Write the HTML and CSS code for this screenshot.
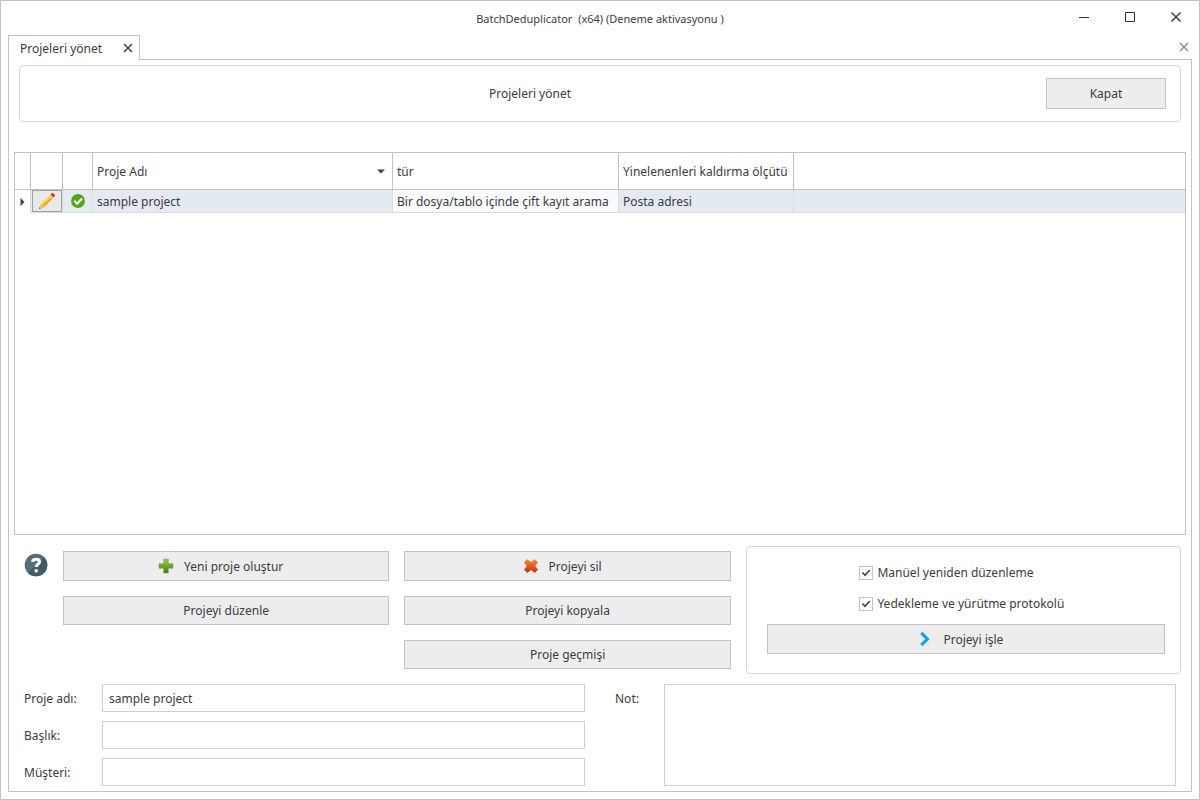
FILE: index.html
```html
<!DOCTYPE html>
<html lang="tr">
<head>
<meta charset="utf-8">
<meta name="viewport" content="width=device-width, initial-scale=1">
<title>BatchDeduplicator</title>
<link rel="stylesheet" href="styles.css">
</head>
<body>
<div class="window">
  <header class="titlebar">
    <h1 class="app-title">BatchDeduplicator&nbsp; (x64) (Deneme aktivasyonu )</h1>
    <div class="window-controls">
      <button type="button" class="icon-button" aria-label="Simge durumuna küçült">
        <svg width="12" height="12" viewBox="0 0 12 12"><path d="M1 6.500h10" stroke="#333" fill="none"/></svg>
      </button>
      <button type="button" class="icon-button" aria-label="Ekranı kapla">
        <svg width="12" height="12" viewBox="0 0 12 12"><path d="M1.500 1.500h9v9h-9z" stroke="#333" fill="none"/></svg>
      </button>
      <button type="button" class="icon-button" aria-label="Pencereyi kapat">
        <svg width="12" height="12" viewBox="0 0 12 12"><path d="M1.500 1.500l9 9M10.500 1.500l-9 9" stroke="#444" stroke-width="1.600" fill="none"/></svg>
      </button>
    </div>
  </header>

  <nav class="tabs">
    <div class="tab">
      <span>Projeleri yönet</span>
      <button type="button" class="icon-button" aria-label="Sekmeyi kapat">
        <svg width="10" height="10" viewBox="0 0 10 10"><path d="M1 1l8 8M9 1l-8 8" stroke="#444" stroke-width="1.600" fill="none"/></svg>
      </button>
    </div>
    <button type="button" class="icon-button close-all" aria-label="Tümünü kapat">
      <svg width="10" height="10" viewBox="0 0 10 10"><path d="M1 1l8 8M9 1l-8 8" stroke="#8a8a8a" stroke-width="1.400" fill="none"/></svg>
    </button>
  </nav>

  <main class="page">
    <section class="page-header">
      <h2 class="page-title">Projeleri yönet</h2>
      <button type="button" class="button close-button">Kapat</button>
    </section>

    <div class="grid-box">
      <table class="projects">
        <colgroup>
          <col class="col-marker"><col class="col-edit"><col class="col-state"><col class="col-name"><col class="col-type"><col class="col-criterion"><col>
        </colgroup>
        <thead>
          <tr>
            <th></th><th></th><th></th>
            <th scope="col">
              <button type="button" class="sort-button">Proje Adı
                <svg width="8" height="5" viewBox="0 0 8 5"><path d="M0 .5h8L4 4.500z" fill="#444"/></svg>
              </button>
            </th>
            <th scope="col">tür</th>
            <th scope="col">Yinelenenleri kaldırma ölçütü</th>
            <th></th>
          </tr>
        </thead>
        <tbody>
          <tr>
            <td class="marker"><svg width="5" height="8" viewBox="0 0 5 8"><path d="M.5 0v8l4-4z" fill="#444"/></svg></td>
            <td class="edit">
              <button type="button" class="edit-button" aria-label="Düzenle">
                <svg width="18" height="18" viewBox="0 0 18 18">
                  <path d="M1 17l1.400-4.400 3 3z" fill="#e9c48d"/>
                  <path d="M1 17l.6-1.900 1.300 1.300z" fill="#555"/>
                  <path d="M2.400 12.600L11.600 3.400l3 3-9.200 9.200z" fill="#fbc02d"/>
                  <path d="M2.400 12.600L11.600 3.400l1 1-9.200 9.200z" fill="#ffd95a"/>
                  <path d="M4.400 14.600l9.200-9.200 1 1-9.200 9.200z" fill="#f0a51c"/>
                  <path d="M11.600 3.400l1.300-1.300 3 3-1.300 1.300z" fill="#d5d5d5"/>
                  <path d="M12.500 2.500l1.200-1.200q.8-.7 1.600 0l1.400 1.400q.7.800 0 1.600l-1.200 1.200z" fill="#d9341a"/>
                </svg>
              </button>
            </td>
            <td class="state">
              <svg width="14" height="14" viewBox="0 0 14 14" role="img" aria-label="Hazır"><circle cx="7" cy="7" r="6.900" fill="#55a51c"/><path d="M3.300 6.800l2.800 2.900 4.900-5.200" stroke="#fff" stroke-width="2.200" fill="none"/></svg>
            </td>
            <td>sample project</td>
            <td class="focused">Bir dosya/tablo içinde çift kayıt arama</td>
            <td>Posta adresi</td>
            <td></td>
          </tr>
        </tbody>
      </table>
    </div>

    <section class="actions">
      <button type="button" class="icon-button help" aria-label="Yardım">
        <svg width="24" height="24" viewBox="0 0 24 24">
          <circle cx="12" cy="12" r="11.300" fill="#546e7a"/>
          <path d="M20 4a11.300 11.300 0 0 1-16 16z" fill="#455a64"/>
          <path d="M8.600 8.800C8.800 7 10.200 6.200 12.100 6.200c2.100 0 3.400.9 3.400 2.600 0 2.500-3.300 2.500-3.300 5.300" stroke="#fff" stroke-width="3.100" fill="none"/>
          <circle cx="12.200" cy="17.700" r="1.800" fill="#fff"/>
        </svg>
      </button>
      <div class="button-column">
        <button type="button" class="button with-icon">
          <svg width="16" height="16" viewBox="0 0 16 16">
            <defs><linearGradient id="green" x2="0" y2="1"><stop stop-color="#9ccb52"/><stop offset="1" stop-color="#4a7a0c"/></linearGradient></defs>
            <path d="M5.700 1h4.600v4.700H15v4.600h-4.700V15H5.700v-4.700H1V5.700h4.700z" fill="url(#green)" stroke="#6b9a33" stroke-width=".5"/>
          </svg>
          Yeni proje oluştur
        </button>
        <button type="button" class="button">Projeyi düzenle</button>
      </div>
      <div class="button-column">
        <button type="button" class="button with-icon">
          <svg width="16" height="16" viewBox="0 0 16 16">
            <defs><linearGradient id="red" x2="0" y2="1"><stop stop-color="#f58a3c"/><stop offset="1" stop-color="#c9300c"/></linearGradient></defs>
            <path d="M4.200 1.600L8 4.400l3.800-2.800 2.700 2.700L11.700 8l2.800 3.700-2.700 2.700L8 11.600l-3.800 2.800-2.700-2.700L4.300 8 1.500 4.300z" fill="url(#red)" stroke="url(#red)" stroke-linejoin="round"/>
          </svg>
          Projeyi sil
        </button>
        <button type="button" class="button">Projeyi kopyala</button>
        <button type="button" class="button">Proje geçmişi</button>
      </div>
      <div class="run-panel">
        <div class="options">
          <label class="option"><input type="checkbox" class="checkbox" checked>Manüel yeniden düzenleme</label>
          <label class="option"><input type="checkbox" class="checkbox" checked>Yedekleme ve yürütme protokolü</label>
        </div>
        <button type="button" class="button with-icon">
          <svg width="16" height="16" viewBox="0 0 16 16"><path d="M4.300 1.800l6 6.200-6 6.200" stroke="#1e9be9" stroke-width="3.200" fill="none"/></svg>
          Projeyi işle
        </button>
      </div>
    </section>

    <form class="details">
      <div class="fields">
        <label for="name">Proje adı:</label>
        <input id="name" class="field" type="text" value="sample project">
        <label for="heading">Başlık:</label>
        <input id="heading" class="field" type="text">
        <label for="customer">Müşteri:</label>
        <input id="customer" class="field" type="text">
      </div>
      <label for="note" class="note-label">Not:</label>
      <textarea id="note" class="field note"></textarea>
    </form>
  </main>
</div>
</body>
</html>
```

FILE: styles.css
```css
* {
  box-sizing: border-box;
}

body {
  margin: 0;
  background: #fff;
  color: #3c3c3c;
  font: 12px/19px "Noto Sans", "Open Sans", sans-serif;
}

button,
input,
textarea {
  margin: 0;
  color: inherit;
  font: inherit;
}

svg {
  display: block;
  flex: none;
}

.window {
  display: flex;
  flex-direction: column;
  min-height: 100vh;
  padding: 0 7px 7px;
  border: 1px solid #c3c3c3;
}

.icon-button {
  display: flex;
  padding: 0;
  border: 0;
  background: none;
}

.titlebar {
  display: grid;
  grid-template-columns: 1fr auto 1fr;
  align-items: center;
  height: 34px;
}

.app-title {
  grid-column: 2;
  margin: 0;
  font-size: 11px;
  font-weight: 400;
}

.window-controls {
  display: flex;
  justify-content: flex-end;
  gap: 34px;
  padding: 0 10px 2px 0;
}

.tabs {
  display: flex;
  justify-content: space-between;
  align-items: center;
}

.tab {
  display: flex;
  align-items: center;
  justify-content: space-between;
  gap: 16px;
  min-width: 132px;
  height: 25px;
  margin-bottom: -1px;
  padding: 0 6px 0 11px;
  border: 1px solid #c3c3c3;
  border-bottom: 0;
  background: #fff;
  z-index: 1;
}

.close-all {
  margin-right: 3px;
}

.page {
  display: flex;
  flex: 1;
  flex-direction: column;
  padding: 5px;
  border: 1px solid #c3c3c3;
}

.page-header {
  display: flex;
  align-items: center;
  gap: 6px;
  height: 57px;
  margin: 0 5px 30px;
  padding-right: 14px;
  border: 1px solid #d6d6d6;
  border-radius: 4px;
}

.page-title {
  flex: 1;
  margin: 0;
  font-size: 12px;
  font-weight: 400;
  text-align: center;
}

.button {
  display: flex;
  align-items: center;
  justify-content: center;
  gap: 10px;
  height: 29px;
  padding: 0 12px;
  border: 1px solid #c3c3c3;
  background: #ededed;
}

.with-icon {
  height: 30px;
  padding-right: 23px;
}

.close-button {
  width: 120px;
  height: 31px;
}

.grid-box {
  flex: 1;
  border: 1px solid #c3c3c3;
}

.projects {
  width: 100%;
  table-layout: fixed;
  border-collapse: separate;
  border-spacing: 0;
  white-space: nowrap;
}

.col-marker { width: 16px; }
.col-edit { width: 32px; }
.col-state { width: 30px; }
.col-name { width: 300px; }
.col-type { width: 226px; }
.col-criterion { width: 175px; }

.projects th {
  height: 37px;
  padding: 0 4px;
  border-right: 1px solid #c3c3c3;
  border-bottom: 1px solid #c3c3c3;
  font-weight: 400;
  text-align: left;
}

.projects td {
  height: 23px;
  padding: 0 4px;
  border-right: 1px solid #dcdcdc;
  border-bottom: 1px solid #dcdcdc;
  background: #e3eaf2;
}

.projects th:last-child,
.projects td:last-child {
  border-right: 0;
}

.projects .marker {
  padding-left: 5px;
  border-bottom: 0;
  background: #fff;
}

.projects .edit {
  padding: 0 0 0 1px;
}

.projects .state {
  padding: 0 8px;
}

.projects .focused {
  background: #f8fafc;
}

.edit-button {
  display: flex;
  align-items: center;
  justify-content: center;
  width: 30px;
  height: 22px;
  padding: 0;
  border: 1px solid #a0a0a0;
  background: #e9e9e9;
}

.sort-button {
  display: flex;
  align-items: center;
  justify-content: space-between;
  width: 100%;
  padding: 0 3px 0 0;
  border: 0;
  background: none;
}

.actions {
  display: grid;
  grid-template-columns: 29px 3fr 3fr 4fr;
  gap: 15px;
  margin: 11px 5px 10px;
}

.help {
  align-self: start;
  padding: 7px 0 0 5px;
}

.button-column {
  display: flex;
  flex-direction: column;
  gap: 15px;
  padding-top: 5px;
}

.run-panel {
  display: flex;
  flex-direction: column;
  gap: 11px;
  padding: 16px 15px 19px 20px;
  border: 1px solid #d6d6d6;
  border-radius: 4px;
}

.options {
  display: flex;
  flex-direction: column;
  align-self: center;
  gap: 12px;
  padding-right: 8px;
}

.option {
  display: flex;
  align-items: center;
  gap: 4px;
}

.checkbox {
  appearance: none;
  width: 14px;
  height: 14px;
  border: 1px solid #c3c3c3;
  background: #fff;
}

.checkbox:checked {
  background: url("data:image/svg+xml,%3Csvg xmlns='http://www.w3.org/2000/svg' viewBox='0 0 12 12'%3E%3Cpath d='M2.500 5.500l2.500 2.800 4.800-5.300' fill='none' stroke='%23444' stroke-width='1.600'/%3E%3C/svg%3E") center / 12px no-repeat;
}

.details {
  display: grid;
  grid-template-columns: 591fr 49px 512fr;
  margin: 0 10px;
}

.fields {
  display: grid;
  grid-template-columns: 78px 1fr;
  row-gap: 9px;
  align-items: center;
  padding-right: 30px;
}

.field {
  width: 100%;
  height: 28px;
  padding: 0 6px;
  border: 1px solid #cfcfcf;
  border-radius: 0;
  background: #fff;
}

.note-label {
  padding-top: 5px;
}

.note {
  height: 100%;
  padding: 4px 6px;
  resize: none;
}
```
